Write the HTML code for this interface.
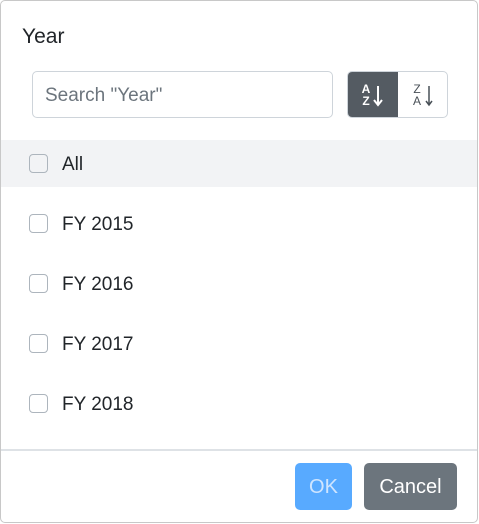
<!DOCTYPE html><html><head><style>
body{margin:0;width:479px;height:524px;overflow:hidden;font-family:"Liberation Sans",sans-serif;background:#fff}
.box{position:absolute;left:0;top:0;width:476px;height:521px;border:1px solid #c8c8c8;border-radius:5px;}
.t{position:absolute;left:22px;top:25px;font-size:21px;color:#212529}
.inp{position:absolute;left:32px;top:71px;width:299px;height:45px;border:1px solid #ced4da;border-radius:5px;box-sizing:content-box}
.inp span{position:absolute;left:12px;top:13px;font-size:19px;color:#6c757d}
.bg{position:absolute;left:347px;top:71px;width:99px;height:45px;border:1px solid #ced4da;border-radius:5px;overflow:hidden}
.b1{position:absolute;left:0;top:0;width:50px;height:47px;background:#545b62}
.az{position:absolute;font-size:12px;line-height:12px;font-weight:bold;text-align:center;width:10px}
.row{position:absolute;left:1px;width:476px;height:47px}
.cb{position:absolute;left:29px;width:19px;height:19px;border:1.5px solid #adb5bd;border-radius:4px;box-sizing:border-box}
.lb{position:absolute;left:62px;font-size:19px;color:#212529}
.sep{position:absolute;left:1px;top:449px;width:476px;height:2px;background:#dee2e6}
.btn{position:absolute;top:463px;height:47px;border-radius:5px;color:#fff;font-size:20px;line-height:49px;text-align:center}
</style></head><body>
<div class="box"></div>
<div class="t">Year</div>
<div class="inp"><span>Search "Year"</span></div>
<div class="bg"><div class="b1"></div>
<div class="az" style="left:13px;top:11px;color:#fff">A<br>Z</div>
<svg style="position:absolute;left:24px;top:12px" width="14" height="28"><path d="M6 2V21M2 16L6 21L10 16" stroke="#fff" stroke-width="2" fill="none"/></svg>
<div class="az" style="left:64px;top:11px;color:#495057;font-weight:normal">Z<br>A</div>
<svg style="position:absolute;left:75px;top:12px" width="14" height="28"><path d="M6 2V21M3 17L6 21L9 17" stroke="#495057" stroke-width="1.5" fill="none"/></svg>
</div>
<div class="row" style="top:140px;background:#f2f3f5"></div>
<div class="cb" style="top:154px"></div><div class="lb" style="top:154px">All</div>
<div class="cb" style="top:214px"></div><div class="lb" style="top:214px">FY 2015</div>
<div class="cb" style="top:274px"></div><div class="lb" style="top:274px">FY 2016</div>
<div class="cb" style="top:334px"></div><div class="lb" style="top:334px">FY 2017</div>
<div class="cb" style="top:394px"></div><div class="lb" style="top:394px">FY 2018</div>
<div class="sep"></div>
<div class="btn" style="left:295px;width:57px;background:#58aaff;color:#cfe5ff">OK</div>
<div class="btn" style="left:364px;width:93px;background:#6c757d">Cancel</div>
</body></html>
